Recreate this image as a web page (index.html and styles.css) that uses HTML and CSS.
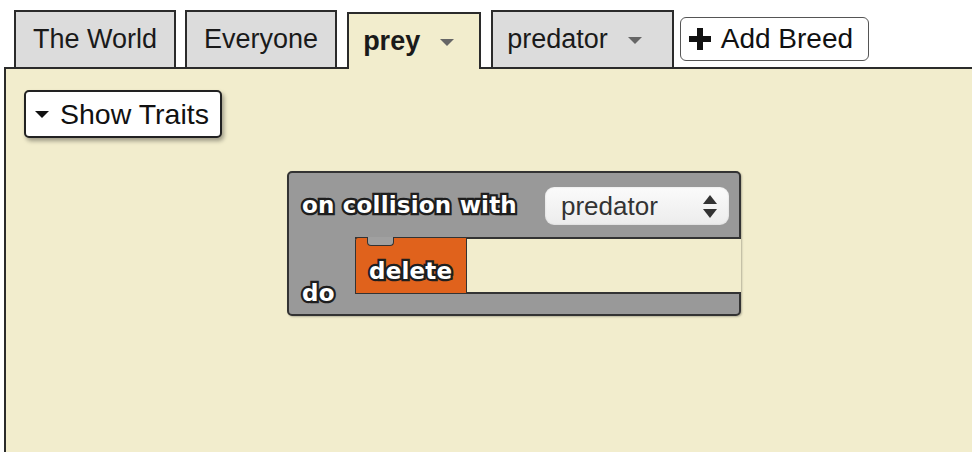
FILE: index.html
```html
<!DOCTYPE html>
<html lang="en">
<head>
  <meta charset="UTF-8">
  <title>Breeds</title>
  <link rel="stylesheet" href="styles.css">
</head>
<body>

<div class="tabs">
  <div class="tab">The World</div>
  <div class="tab">Everyone</div>
  <div class="tab active">prey <span class="caret"></span></div>
  <div class="tab">predator <span class="caret"></span></div>
  <button class="add-breed"><span class="plus"></span>Add Breed</button>
</div>

<div class="panel">
  <button class="show-traits"><span class="caret-black"></span>Show Traits</button>

  <!-- block sits on the workspace canvas -->
  <div class="block">
    <div class="block-head">
      <span class="label">on collision with</span>
      <div class="select">predator <span class="updown"><i class="up"></i><i class="down"></i></span></div>
    </div>
    <div class="do-col"><span class="label">do</span></div>
    <div class="socket">
      <div class="stmt">
        <span class="notch"></span>
        <span class="label">delete</span>
      </div>
    </div>
  </div>
</div>

</body>
</html>
```

FILE: styles.css
```css
html, body {
  margin: 0;
  height: 100%;
  background: #fff;
  font-family: "Liberation Sans", Arial, sans-serif;
  color: #1a1a1a;
  overflow: hidden;
}

.tabs {
  display: flex;
  align-items: flex-end;
  padding: 10px 0 0 14px;
  gap: 9px;
  position: relative;
  z-index: 2;
}
.tab {
  height: 57px;
  box-sizing: border-box;
  display: flex;
  align-items: center;
  padding: 0 17px;
  font-size: 27px;
  background: #dcdcdc;
  border: 2px solid #2b2b2b;
  border-bottom: none;
}
.tab.active {
  height: 57px;
  margin-bottom: -2px;
  padding: 0 25px 0 14px;
  background: #f2edcd;
  font-weight: bold;
}
.tab .caret {
  display: inline-block;
  margin-left: 20px;
  margin-top: 2px;
  border-left: 7.5px solid transparent;
  border-right: 7.5px solid transparent;
  border-top: 7px solid #666;
}
.tab:nth-child(3) { margin-left: 1px; }
.tab:nth-child(4) { margin-left: 1px; padding: 0 30px 0 14px; }

.add-breed {
  align-self: center;
  margin-left: -3px;
  height: 44px;
  width: 189px;
  box-sizing: border-box;
  display: flex;
  align-items: center;
  padding: 0 0 0 8px;
  font-family: "Liberation Sans", Arial, sans-serif;
  font-size: 28px;
  color: #111;
  background: #fff;
  border: 1.5px solid #555;
  border-radius: 6px;
}
.plus {
  position: relative;
  width: 22px;
  height: 22px;
  margin-right: 10px;
}
.plus::before, .plus::after {
  content: "";
  position: absolute;
  background: #111;
}
.plus::before { left: 0; right: 0; top: 8px; height: 6px; }
.plus::after { top: 0; bottom: 0; left: 8px; width: 6px; }

.panel {
  position: relative;
  margin-left: 4px;
  height: calc(100% - 67px);
  box-sizing: border-box;
  background: #f2edcd;
  border-top: 2px solid #2b2b2b;
  border-left: 2px solid #2b2b2b;
  padding: 21px 0 0 18px;
  z-index: 1;
}

.show-traits {
  display: flex;
  align-items: center;
  height: 48px;
  width: 198px;
  box-sizing: border-box;
  padding: 0 0 0 9px;
  font-family: "Liberation Sans", Arial, sans-serif;
  font-size: 28.5px;
  color: #111;
  background: #fff;
  border: 2px solid #222;
  border-radius: 5px;
  box-shadow: 2px 3px 4px rgba(0, 0, 0, 0.35);
}
.caret-black {
  display: inline-block;
  margin-right: 11px;
  border-left: 7px solid transparent;
  border-right: 7px solid transparent;
  border-top: 7px solid #111;
}

/* blockly-style block */
.block {
  position: absolute;
  left: 281px;
  top: 102px;
  width: 454px;
  box-sizing: border-box;
  display: grid;
  grid-template-columns: 66px 1fr;
  grid-template-rows: 64px 57px 20px;
  background: #999;
  border: 2px solid #333;
  border-radius: 5px;
  box-shadow: 1px 1px 2px rgba(0, 0, 0, 0.25);
}
.label {
  font-family: "DejaVu Sans", sans-serif;
  font-weight: bold;
  font-size: 23px;
  color: #fff;
  -webkit-text-stroke: 4.5px #1e1e1e;
  paint-order: stroke fill;
  letter-spacing: 0.2px;
}
.block-head {
  grid-column: 1 / 3;
  display: flex;
  align-items: center;
  justify-content: space-between;
  padding: 0 10px 0 13px;
}
.select {
  width: 184px;
  height: 38px;
  box-sizing: border-box;
  display: flex;
  align-items: center;
  justify-content: space-between;
  padding: 0 12px 0 16px;
  margin-top: 2px;
  font-size: 26px;
  color: #333;
  background: linear-gradient(#fbfbfb, #ececec);
  border-radius: 9px;
  box-shadow: inset 0 0 2px rgba(0, 0, 0, 0.15);
}
.updown {
  display: flex;
  flex-direction: column;
  gap: 5px;
}
.updown i {
  display: block;
  border-left: 7px solid transparent;
  border-right: 7px solid transparent;
}
.updown .up { border-bottom: 9px solid #333; }
.updown .down { border-top: 9px solid #333; }

.do-col {
  grid-row: 2 / 4;
  display: flex;
  align-items: flex-end;
  padding: 0 0 8px 13px;
}
.socket {
  display: flex;
  margin-right: -2px;
  background: #f2edcd;
  border-top: 2px solid #333;
  border-bottom: 2px solid #333;
}
.stmt {
  position: relative;
  width: 112px;
  margin: -2px 0;
  box-sizing: border-box;
  display: flex;
  align-items: center;
  padding: 10px 0 0 13px;
  background: #e0621c;
  border: 1.5px solid #333;
  border-radius: 3px 0 0 0;
}
.notch {
  position: absolute;
  left: 11px;
  top: -1.5px;
  width: 27px;
  height: 9px;
  box-sizing: border-box;
  background: #a0a0a0;
  border: 1.5px solid #333;
  border-top: none;
  border-radius: 0 0 4px 4px;
}
```
